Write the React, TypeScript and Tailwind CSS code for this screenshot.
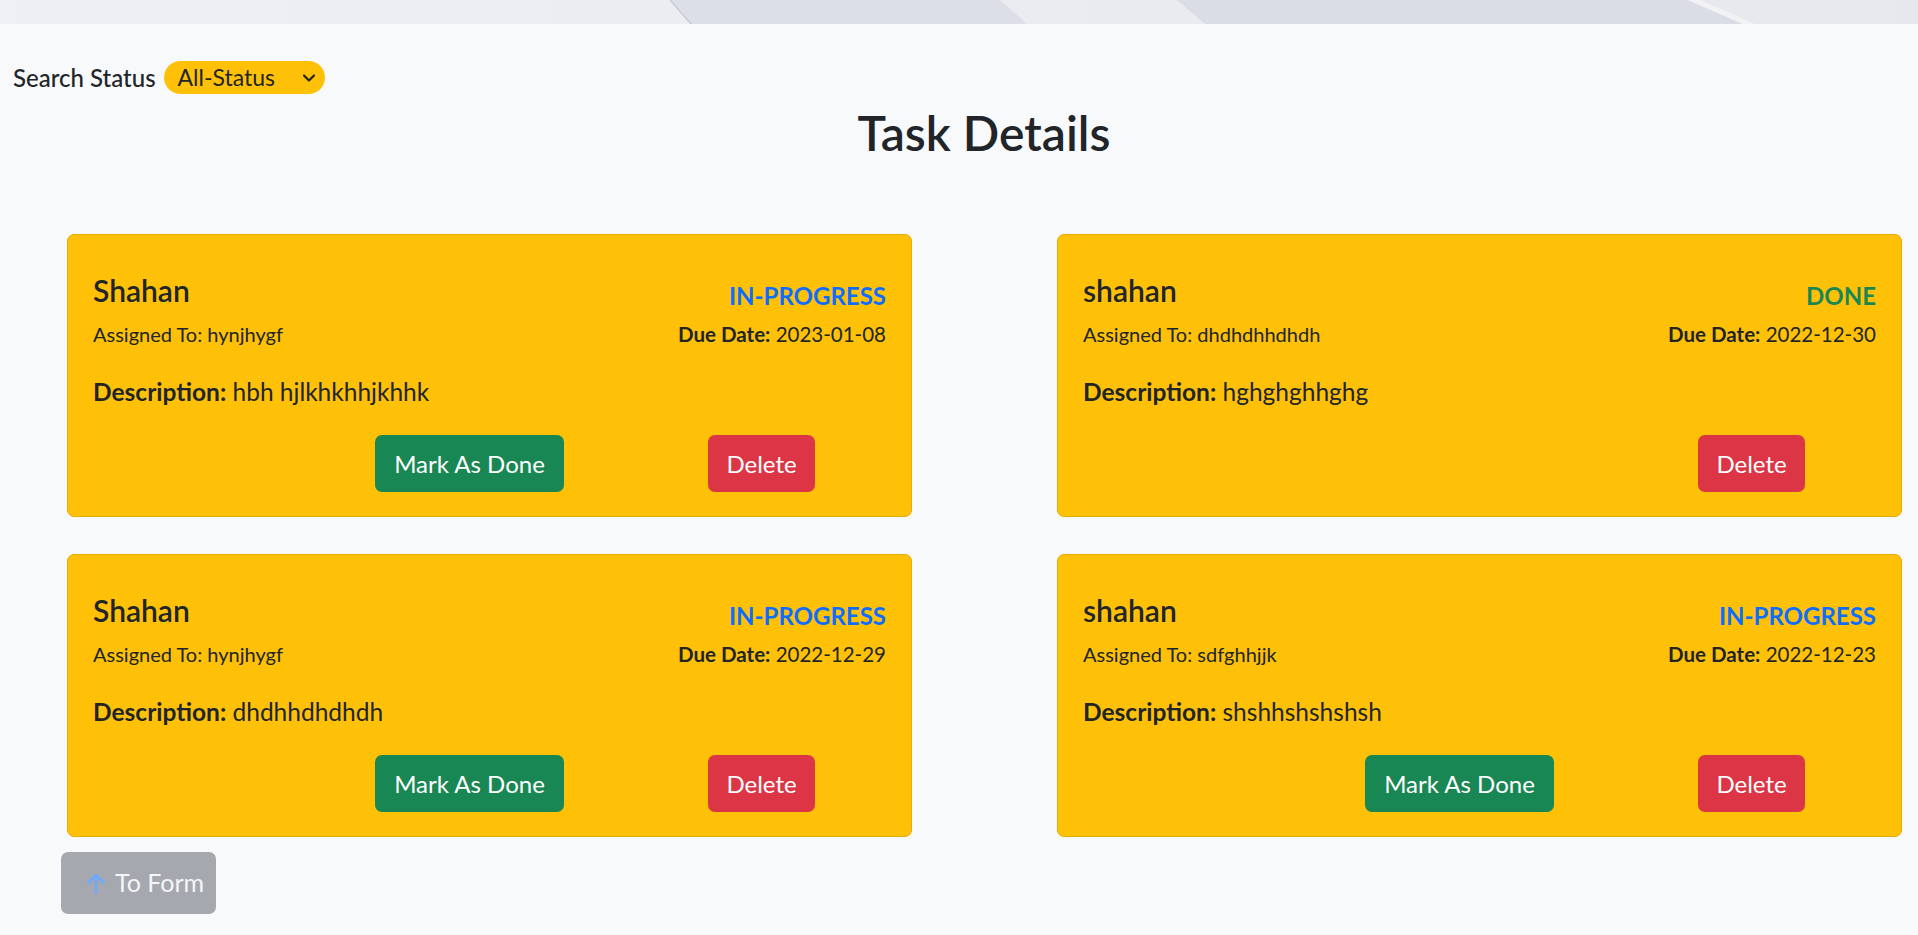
import * as React from "react";

type Task = {
  id: number;
  name: string;
  assignedTo: string;
  dueDate: string;
  description: string;
  status: "IN-PROGRESS" | "DONE";
};

const tasks: Task[] = [
  { id: 1, name: "Shahan", assignedTo: "hynjhygf", dueDate: "2023-01-08", description: "hbh hjlkhkhhjkhhk", status: "IN-PROGRESS" },
  { id: 2, name: "shahan", assignedTo: "dhdhdhhdhdh", dueDate: "2022-12-30", description: "hghghghhghg", status: "DONE" },
  { id: 3, name: "Shahan", assignedTo: "hynjhygf", dueDate: "2022-12-29", description: "dhdhhdhdhdh", status: "IN-PROGRESS" },
  { id: 4, name: "shahan", assignedTo: "sdfghhjjk", dueDate: "2022-12-23", description: "shshhshshshsh", status: "IN-PROGRESS" },
];

const font = { fontFamily: "Lato, 'Noto Sans', sans-serif" };

const TopBanner = () => (
  <svg className="block h-[24px] w-full" viewBox="0 0 1918 24" preserveAspectRatio="none">
    <defs>
      <linearGradient id="band" x1="0" x2="1" y1="0" y2="0">
        <stop offset="0" stopColor="#eff0f3" />
        <stop offset="1" stopColor="#e7e8ed" />
      </linearGradient>
    </defs>
    <rect width="1918" height="24" fill="url(#band)" />
    <polygon points="670,0 1000,0 1027,24 691,24" fill="#dcdee8" />
    <polygon points="669,0 671,0 692,24 690,24" fill="#c9cbd5" />
    <polygon points="1177,0 1688,0 1743,24 1205,24" fill="#dbdde6" />
    <polygon points="1688,0 1700,0 1755,24 1743,24" fill="#f2f2f5" />
  </svg>
);

const TaskCard = ({ task }: { task: Task }) => {
  const done = task.status === "DONE";
  return (
    <div className="flex w-[845px] flex-col rounded-[7px] border border-[#e5ad06] bg-[#ffc107] px-[25px] pb-[24px] pt-[37px] text-[#212529]">
      <div className="flex items-start justify-between">
        <h4 className="text-[30px] font-semibold leading-[36px]">{task.name}</h4>
        <span
          className={`mt-[9px] text-[24px] font-bold leading-[30px] ${done ? "text-[#198754]" : "text-[#0d6efd]"}`}
        >
          {task.status}
        </span>
      </div>
      <div className="mt-[8px] flex justify-between text-[20px] leading-[30px]">
        <span>Assigned To: {task.assignedTo}</span>
        <span className="text-[20.5px]">
          <span className="font-bold">Due Date:</span> {task.dueDate}
        </span>
      </div>
      <p className="mt-[24px] text-[24.5px] leading-[38px]">
        <span className="font-bold">Description:</span> {task.description}
      </p>
      <div className="mr-[71px] mt-[24px] flex justify-end gap-[144px]">
        {!done && (
          <button className="h-[57px] w-[189px] rounded-[7px] bg-[#198754] text-[24px] text-white">
            Mark As Done
          </button>
        )}
        <button className="h-[57px] w-[107px] rounded-[7px] bg-[#dc3545] text-[24px] text-white">
          Delete
        </button>
      </div>
    </div>
  );
};

export default function App() {
  return (
    <div className="min-h-screen bg-[#f8f9fa] text-[#212529]" style={font}>
      <TopBanner />

      <div className="ml-[13px] mt-[37px] flex h-[33px] items-center gap-[8px]">
        <label className="text-[24px] font-medium leading-[33px]">Search Status</label>
        <div className="flex h-[33px] w-[161px] items-center justify-between rounded-full bg-[#ffc107] pl-[14px] pr-[10px] text-[23px]">
          <span>All-Status</span>
          <svg width="12" height="8" viewBox="0 0 12 8" fill="none">
            <path d="M1 1.5l5 5 5-5" stroke="#212529" strokeWidth="2.2" strokeLinecap="round" strokeLinejoin="round" />
          </svg>
        </div>
      </div>

      <h1 className="mt-[9px] pl-[50px] text-center text-[48px] font-semibold leading-[60px]">Task Details</h1>

      <div className="ml-[67px] mt-[71px] grid grid-cols-[845px_845px] gap-x-[145px] gap-y-[37px]">
        {tasks.map((t) => (
          <TaskCard key={t.id} task={t} />
        ))}
      </div>

      <button className="ml-[61px] mt-[15px] flex h-[62px] w-[155px] items-center gap-[9px] rounded-[7px] bg-[#a5a9af] pl-[25px] text-[25px] text-[#f4f5f6]">
        <svg width="20" height="22" viewBox="0 0 20 22" fill="none">
          <path d="M10 21V3M2.5 10.5L10 3l7.5 7.5" stroke="#6fa8fd" strokeWidth="2.8" strokeLinecap="round" strokeLinejoin="round" />
        </svg>
        <span>To Form</span>
      </button>
    </div>
  );
}
